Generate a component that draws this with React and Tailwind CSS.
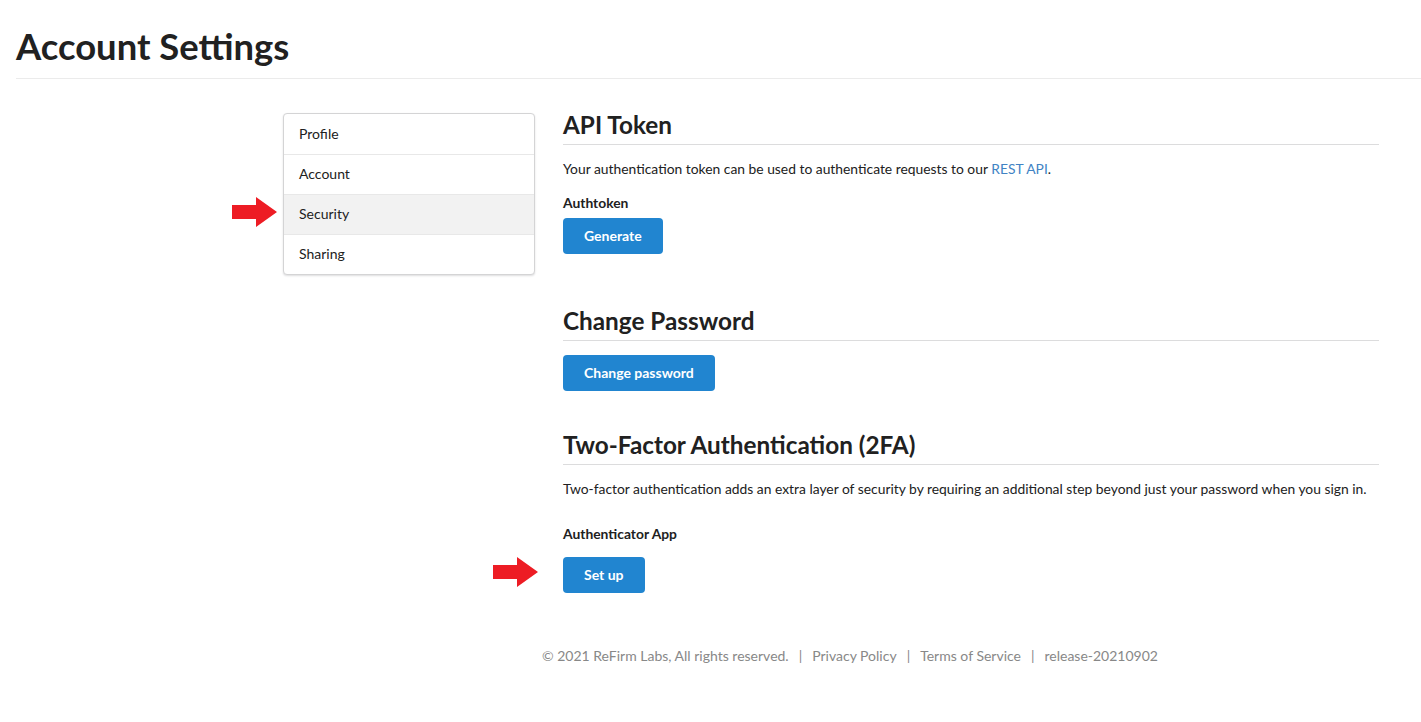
import React from "react";

function Arrow() {
  return (
    <svg width="46" height="30" viewBox="0 0 46 30" className="block">
      <polygon points="0,8 24,8 24,0 45,15 24,30 24,22 0,22" fill="#ed1c24" />
    </svg>
  );
}

function SectionHeader({ children, className = "" }) {
  return (
    <h2
      className={
        "text-[24.3px] leading-[32px] font-bold text-[#212121] pt-[2px] pb-[3px] border-b border-[#dcdcdd] " +
        className
      }
    >
      {children}
    </h2>
  );
}

function Button({ children }) {
  return (
    <button className="h-[36px] px-[21px] rounded-[4px] bg-[#2185d0] text-white text-[14px] font-bold leading-none">
      {children}
    </button>
  );
}

export default function App() {
  const items = ["Profile", "Account", "Security", "Sharing"];
  return (
    <div
      className="min-h-[722px] bg-white text-[#212121] text-[14px]"
      style={{ fontFamily: "Lato, 'Noto Sans', sans-serif" }}
    >
      <div className="ml-[16px] border-b border-[#ebebeb] pt-[23px] pb-[9px]">
        <h1 className="text-[36.4px] leading-[46px] font-bold text-[#212121]">Account Settings</h1>
      </div>

      <div className="flex pl-[232px] mt-[34px]">
        <div className="relative w-[51px] shrink-0">
          <div className="absolute left-0 top-[84px]">
            <Arrow />
          </div>
        </div>
        <div className="w-[252px] shrink-0 self-start rounded-[4px] border border-[#d4d4d5] shadow-[0_1px_2px_0_rgba(34,36,38,0.15)] bg-white overflow-hidden">
          {items.map((it, i) => (
            <div
              key={it}
              className={
                "h-[40px] flex items-center px-[15px] pb-[2px] text-[14px] text-[#212121] " +
                (i > 0 ? "border-t border-[#e8e8e8] " : "") +
                (it === "Security" ? "bg-[#f2f2f2]" : "")
              }
            >
              {it}
            </div>
          ))}
        </div>

        <div className="ml-[28px] w-[816px] -mt-[6px] text-[13.85px]">
          <SectionHeader>API Token</SectionHeader>
          <p className="mt-[14px] leading-[20px]">
            Your authentication token can be used to authenticate requests to our{" "}
            <span className="text-[#4183c4]">REST API</span>.
          </p>
          <div className="mt-[14px] leading-[20px] font-bold">Authtoken</div>
          <div className="mt-[5px]">
            <Button>Generate</Button>
          </div>

          <SectionHeader className="mt-[49px]">Change Password</SectionHeader>
          <div className="mt-[14px]">
            <Button>Change password</Button>
          </div>

          <SectionHeader className="mt-[36px]">Two-Factor Authentication (2FA)</SectionHeader>
          <p className="mt-[14px] leading-[20px]">
            Two-factor authentication adds an extra layer of security by requiring an additional step beyond just your password when you sign in.
          </p>
          <div className="mt-[25px] leading-[20px] font-bold">Authenticator App</div>
          <div className="mt-[13px] relative">
            <div className="absolute left-[-70px] top-0">
              <Arrow />
            </div>
            <Button>Set up</Button>
          </div>
        </div>
      </div>

      <div className="pl-[279px] mt-[53px] flex justify-center text-[#888888] text-[14px] leading-[20px]">
        <span>© 2021 ReFirm Labs, All rights reserved.</span>
        <span className="mx-[10px]">|</span>
        <span>Privacy Policy</span>
        <span className="mx-[10px]">|</span>
        <span>Terms of Service</span>
        <span className="mx-[10px]">|</span>
        <span>release-20210902</span>
      </div>
    </div>
  );
}
